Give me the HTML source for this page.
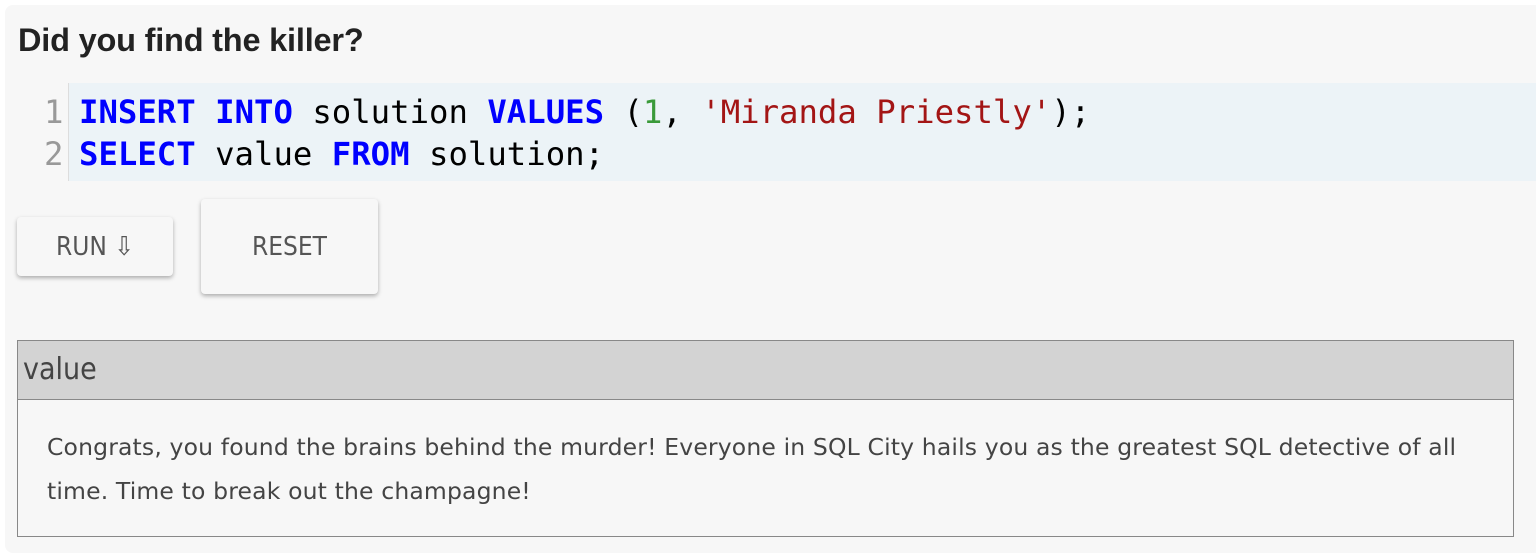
<!DOCTYPE html>
<html><head><style>
html,body{margin:0;padding:0;background:#fff;width:1536px;height:558px;overflow:hidden}
.panel{position:absolute;left:5px;top:5px;width:1540px;height:548px;background:#f7f7f7;border-radius:8px}
h2{position:absolute;left:18px;top:22px;margin:0;font:bold 32.5px "Liberation Sans",sans-serif;color:#222;letter-spacing:-0.2px}
.code{position:absolute;left:17px;top:83px;width:1530px;height:98px;background:#ecf3f7}
.gut{position:absolute;left:0;top:0;width:51px;height:98px;background:#f7f7f7;border-right:1px solid #ddd}
.ln{position:absolute;font:32.3px/42px "DejaVu Sans Mono","Liberation Mono",monospace;white-space:pre;color:#000}
.n{position:absolute;font:32.3px/42px "DejaVu Sans Mono",monospace;color:#999}
.k{color:#0000ff;font-weight:bold}
.num{color:#3a9a3a}
.s{color:#a31515}
.btn{position:absolute;background:#f7f7f7;border-radius:4px;box-shadow:0 2px 4px rgba(0,0,0,.3);font:26px "DejaVu Sans Condensed","Liberation Sans",sans-serif;color:#555;display:flex;align-items:center;justify-content:center}
.tbl{position:absolute;left:17px;top:340px;width:1495px;height:195px;border:1px solid #888}
.th{height:58px;background:#d3d3d3;border-bottom:1px solid #888;font:30px "DejaVu Sans Condensed","Liberation Sans",sans-serif;color:#444;line-height:58px;padding-left:5px}
.td{padding:25px 0 0 29px;font:23.5px/44px "DejaVu Sans","Liberation Sans",sans-serif;letter-spacing:0.15px;color:#444;width:1450px}
</style></head><body>
<div class="panel"></div>
<h2>Did you find the killer?</h2>
<div class="code"><div class="gut"></div></div>
<div class="n" style="left:44px;top:91px">1</div>
<div class="n" style="left:44px;top:133px">2</div>
<div class="ln" style="left:79px;top:91px"><span class="k">INSERT</span> <span class="k">INTO</span> solution <span class="k">VALUES</span> (<span class="num">1</span>, <span class="s">'Miranda Priestly'</span>);</div>
<div class="ln" style="left:79px;top:133px"><span class="k">SELECT</span> value <span class="k">FROM</span> solution;</div>
<div class="btn" style="left:17px;top:217px;width:156px;height:59px">RUN ⇩</div>
<div class="btn" style="left:201px;top:199px;width:177px;height:95px">RESET</div>
<div class="tbl"><div class="th">value</div><div class="td">Congrats, you found the brains behind the murder! Everyone in SQL City hails you as the greatest SQL detective of all time. Time to break out the champagne!</div></div>
</body></html>
